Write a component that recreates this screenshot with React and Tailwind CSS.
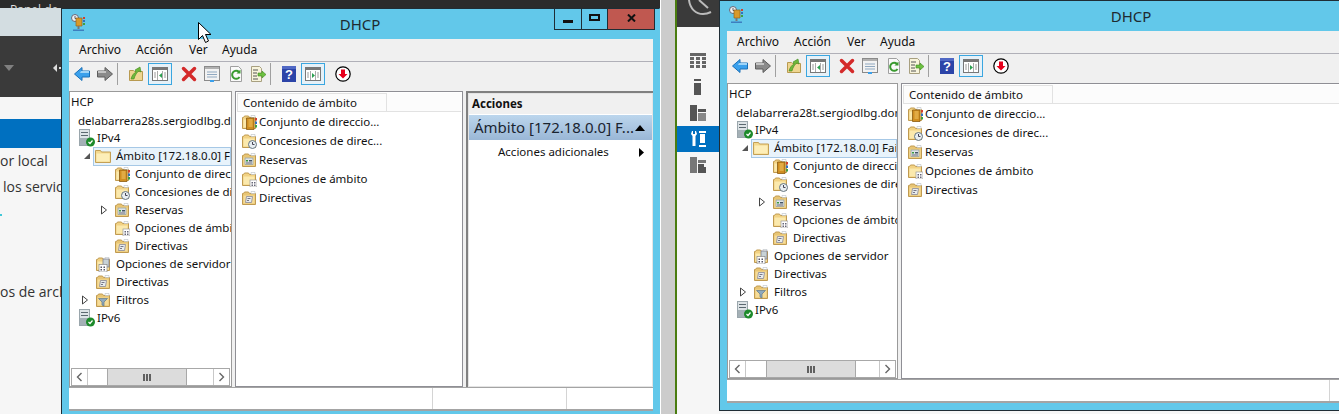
import React from "react";

const Folder = ({ children, dark }) => (
  <svg width="16" height="16" viewBox="0 0 16 16" className="shrink-0">
    <path d="M1.500 14.500V3.500h1l1-1.500h4l1 1.500h6v11z" fill={dark ? "#e8c574" : "#f2d283"} stroke="#c09a50" />
    <path d="M2.500 13.500V5.500h11v8z" fill={dark ? "#f6dc98" : "#fbe9ad"} />
    <path d="M10 1.500h4v2h-4z" fill="#fff" stroke="#b8c0c4" strokeWidth=".6" />
    {children}
  </svg>
);

const Scope = () => (
  <svg width="16" height="16" viewBox="0 0 16 16" className="shrink-0">
    <path d="M.5 14.500V2.500h5l1 1.500h9v10.500z" fill="#f4d98e" stroke="#c4a055" />
    <path d="M1.500 13.500V5.500h13v8z" fill="#fdeeb8" />
  </svg>
);

const Pool = () => (
  <Folder>
    <path d="M5.500 4h7.500v11.500H5.500z" fill="#d08e20" stroke="#8a5a10" strokeWidth=".8" />
    <path d="M7.500 6h4M7.500 8h4M7.500 10h4M7.500 12h4" stroke="#f3c868" />
    <rect x="14" y="4" width="2" height="2.500" fill="#d04030" />
    <rect x="14" y="7.500" width="2" height="2.500" fill="#3070c0" />
    <rect x="14" y="11" width="2" height="2.500" fill="#40a040" />
  </Folder>
);

const Lease = () => (
  <Folder>
    <circle cx="11.500" cy="11.500" r="4" fill="#e8eef2" stroke="#667680" />
    <path d="M11.500 9v2.500h2" stroke="#445" fill="none" />
  </Folder>
);

const Reserve = () => (
  <Folder dark>
    <rect x="4" y="6" width="8" height="6.500" fill="#dfe5e8" stroke="#8a979c" strokeWidth=".7" />
    <path d="M5 8h2v1.500H5z" fill="#3a9a40" />
    <path d="M8 8h3v1.500H8z" fill="#456" />
    <path d="M5 10.500h6v1H5z" fill="#667" />
  </Folder>
);

const Options = () => (
  <Folder>
    <rect x="9" y="9" width="7" height="7" fill="#fff" stroke="#999" strokeWidth=".7" />
    <path d="M10.500 11h1.500v1.500h-1.500zM13 11h1.500v1.500H13zM10.500 13.500h1.500V15h-1.500zM13 13.500h1.500V15H13z" fill="#667" />
  </Folder>
);

const Policy = () => (
  <Folder dark>
    <path d="M5.500 6.500h6l-1 6h-6z" fill="#e8ecec" stroke="#889" strokeWidth=".8" />
    <path d="M6.500 8.500h3M6 10.500h2" stroke="#778" />
  </Folder>
);

const ServerOptions = () => (
  <Folder>
    <rect x="8" y="3" width="6" height="8" fill="#c8d2d6" stroke="#778" strokeWidth=".7" />
    <rect x="4" y="8.500" width="8" height="7.500" fill="#fff" stroke="#888" strokeWidth=".7" />
    <path d="M5.500 10.500H7V12H5.500zM8.500 10.500H10V12H8.500zM5.500 13H7v1.500H5.500zM8.500 13H10v1.500H8.500z" fill="#556" />
  </Folder>
);

const Filter = () => (
  <Folder dark>
    <path d="M3.500 6.500h9L9 10v4l-2-1v-3z" fill="#8fa9bd" stroke="#60788a" strokeWidth=".7" />
  </Folder>
);

const Server = () => (
  <svg width="16" height="18" viewBox="0 0 16 18" className="shrink-0">
    <path d="M0 0h11v17H0z" fill="#9aa6ac" />
    <path d="M1 1h9v15H1z" fill="#dde3e6" />
    <path d="M2 3h7v1H2zM2 6h7v1H2z" fill="#5b6870" />
    <path d="M1 9h9v7H1z" fill="#a4b0b6" />
    <circle cx="11.500" cy="13" r="4.500" fill="#1d8a2a" />
    <path d="M9.500 13l1.500 1.500 2.500-3" stroke="#fff" strokeWidth="1.200" fill="none" />
  </svg>
);

const Arrow = ({ open }) =>
  open ? (
    <svg width="8" height="8" viewBox="0 0 8 8" className="shrink-0">
      <path d="M7 1v6H1z" fill="#555" />
    </svg>
  ) : (
    <svg width="8" height="10" viewBox="0 0 8 10" className="shrink-0">
      <path d="M1.500 1l5 4-5 4z" fill="#fff" stroke="#444" />
    </svg>
  );

const Tb = {
  Back: () => (
    <svg width="16" height="16" viewBox="0 0 16 16">
      <path d="M8 1.500L.5 8 8 14.500V11h7.500V5H8z" fill="#3aa0ec" stroke="#1a70b8" />
      <path d="M7 5h8v2H6z" fill="#9ed4f8" />
    </svg>
  ),
  Fwd: () => (
    <svg width="16" height="16" viewBox="0 0 16 16">
      <path d="M8 1.500L15.500 8 8 14.500V11H.5V5H8z" fill="#8a8a8a" stroke="#5c5c5c" />
      <path d="M1 5h8v2H1z" fill="#c4c4c4" />
    </svg>
  ),
  Up: () => (
    <svg width="16" height="16" viewBox="0 0 16 16">
      <path d="M1.500 14.500V4.500h4l1 1h8v9z" fill="#eed590" stroke="#b89a50" />
      <path d="M3 13c1-4 3-6 5-7L7 4l5-3 1 5-2-1c-2 1-4 4-5 8z" fill="#6fb83a" stroke="#3f8a1e" strokeWidth=".6" />
    </svg>
  ),
  Pane: ({ right }) => (
    <svg width="16" height="14" viewBox="0 0 16 14">
      <rect x=".5" y=".5" width="15" height="13" fill="#fff" stroke="#777" />
      <path d="M1 1h14v2H1z" fill="#777" />
      <path d="M5.500 4v9M10.500 4v9" stroke="#aaa" />
      {right ? <path d="M7 6l3 2.500L7 11z" fill="#2aa050" /> : <path d="M10 6L7 8.500 10 11z" fill="#2aa050" />}
      <path d="M2 6h2M2 8h2M2 10h2M12 6h2M12 8h2M12 10h2" stroke="#999" />
    </svg>
  ),
  X: () => (
    <svg width="16" height="16" viewBox="0 0 16 16">
      <path d="M2.500 2.500l11 11M13.500 2.500l-11 11" stroke="#d42a2a" strokeWidth="3.500" strokeLinecap="round" />
    </svg>
  ),
  Props: () => (
    <svg width="16" height="16" viewBox="0 0 16 16">
      <rect x=".5" y=".5" width="15" height="14" fill="#f2f2f2" stroke="#8a8a8a" />
      <path d="M1 1h14v2H1z" fill="#b0b0b0" />
      <path d="M3 6h10M3 8.500h10M3 11h10" stroke="#8fa8c0" />
      <path d="M6 14h4v2H6z" fill="#3aa0ec" />
    </svg>
  ),
  Refresh: () => (
    <svg width="16" height="16" viewBox="0 0 16 16">
      <path d="M2.500.5h8l3 3v12h-11z" fill="#fafafa" stroke="#a0a0a0" />
      <path d="M11.500 11a4 4 0 1 1-.5-5" fill="none" stroke="#3a9a30" strokeWidth="2" />
      <path d="M12.500 3.500v4h-4z" fill="#3a9a30" />
    </svg>
  ),
  Export: () => (
    <svg width="16" height="16" viewBox="0 0 16 16">
      <path d="M1.500.5h8l2 2v13h-10z" fill="#f8f4dc" stroke="#a8a080" />
      <path d="M3 4h5M3 7h4M3 10h4M3 13h5" stroke="#555" />
      <path d="M8 7h4V5l4 3.500-4 3.500v-2H8z" fill="#6cc040" stroke="#3f8a1e" strokeWidth=".6" />
    </svg>
  ),
  Help: () => (
    <svg width="16" height="16" viewBox="0 0 16 16" className="overflow-visible">
      <rect x="1" y="0" width="14" height="16" fill="#2c44a8" />
      <path d="M1 0h14v3H1z" fill="#5068c4" />
      <text x="8" y="13" textAnchor="middle" fontSize="13" fontWeight="700" fill="#fff" fontFamily="Liberation Sans">?</text>
    </svg>
  ),
  Down: () => (
    <svg width="16" height="16" viewBox="0 0 16 16">
      <circle cx="8" cy="8" r="7.200" fill="#fff" stroke="#000" strokeWidth="1.200" />
      <path d="M6 3.500h4V8h2.500L8 12.500 3.500 8H6z" fill="#e8001c" />
    </svg>
  ),
};

const Sep = () => <div className="ml-[4px] h-[22px] w-[1px] bg-[#a0a0a0]" />;
const Boxed = ({ right }) => (
  <div className="ml-[4px] flex h-[22px] w-[24px] items-center justify-center border border-[#3aa6e0] bg-[#e6f1f8]">
    <Tb.Pane right={right} />
  </div>
);

function Toolbar() {
  return (
    <div className="flex h-[29px] items-center bg-[#f0f0f0] pb-[6px] pl-[5px]">
      <Tb.Back />
      <div className="ml-[7px]"><Tb.Fwd /></div>
      <Sep />
      <div className="ml-[10px]"><Tb.Up /></div>
      <Boxed />
      <div className="ml-[9px]"><Tb.X /></div>
      <div className="ml-[7px]"><Tb.Props /></div>
      <div className="ml-[8px]"><Tb.Refresh /></div>
      <div className="ml-[6px]"><Tb.Export /></div>
      <Sep />
      <div className="ml-[10px]"><Tb.Help /></div>
      <Boxed right />
      <div className="ml-[10px]"><Tb.Down /></div>
    </div>
  );
}

const Text = ({ children }) => <span className="shrink-0 whitespace-nowrap">{children}</span>;

function L2({ icon, children, arrow }) {
  return (
    <div className="flex h-[18px] items-center pl-[29px]">
      <div className="flex w-[15px] shrink-0 items-center pl-[1px]">{arrow && <Arrow />}</div>
      {icon}
      <div className="w-[5px] shrink-0" />
      <Text>{children}</Text>
    </div>
  );
}

function L1({ icon, children, arrow }) {
  return (
    <div className="flex h-[18px] items-center pl-[10px]">
      <div className="flex w-[15px] shrink-0 items-center pl-[1px]">{arrow && <Arrow />}</div>
      {icon}
      <div className="w-[5px] shrink-0" />
      <Text>{children}</Text>
    </div>
  );
}

function L0({ children }) {
  return (
    <div className="flex h-[18px] items-center gap-[2px] pl-[9px]">
      <Server />
      <Text>{children}</Text>
    </div>
  );
}

function Tree({ host, paneCls, thumbCls }) {
  return (
    <div className={`flex shrink-0 flex-col overflow-hidden border border-[#9a9a9a] bg-white ${paneCls}`}>
      <div className="min-h-0 flex-1 overflow-hidden pt-[1px]">
        <div className="flex h-[18px] items-center pl-[1px]"><Text>HCP</Text></div>
        <div className="mt-[1px] flex h-[18px] items-center pl-[8px]"><Text>{host}</Text></div>
        <div className="mt-[-1px]"><L0>IPv4</L0></div>
        <div className="flex h-[18px] items-center pl-[10px]">
          <div className="flex w-[13px] shrink-0 items-center pl-[3px]"><Arrow open /></div>
          <div className="flex h-[19px] min-w-0 flex-1 items-center overflow-hidden border border-[#a6c8e6] bg-[#e8f3fb] pl-[1px]">
            <Scope />
            <div className="w-[5px] shrink-0" />
            <Text>Ámbito [172.18.0.0] Failover</Text>
          </div>
        </div>
        <L2 icon={<Pool />}>Conjunto de direcciones</L2>
        <L2 icon={<Lease />}>Concesiones de direcciones</L2>
        <L2 icon={<Reserve />} arrow>Reservas</L2>
        <L2 icon={<Options />}>Opciones de ámbito</L2>
        <L2 icon={<Policy />}>Directivas</L2>
        <L1 icon={<ServerOptions />}>Opciones de servidor</L1>
        <L1 icon={<Policy />}>Directivas</L1>
        <L1 icon={<Filter />} arrow>Filtros</L1>
        <L0>IPv6</L0>
      </div>
      <div className="mx-[1px] flex h-[18px] shrink-0 border border-[#a8a8a8] bg-white text-[#555]">
        <div className="flex w-[16px] items-center justify-center border-r border-[#c8c8c8]">
          <svg width="7" height="10" viewBox="0 0 7 10"><path d="M5.500 1l-4 4 4 4" fill="none" stroke="#666" strokeWidth="1.400" /></svg>
        </div>
        <div className="flex-1">
          <div className={`flex h-full items-center justify-center border-x border-[#a8a8a8] bg-[#dcdcdc] ${thumbCls}`}>
            <svg width="8" height="7" viewBox="0 0 8 7"><path d="M0 0h2v7H0zM3 0h2v7H3zM6 0h2v7H6z" fill="#606060" /></svg>
          </div>
        </div>
        <div className="flex w-[16px] items-center justify-center border-l border-[#c8c8c8]">
          <svg width="7" height="10" viewBox="0 0 7 10"><path d="M1.500 1l4 4-4 4" fill="none" stroke="#666" strokeWidth="1.400" /></svg>
        </div>
      </div>
    </div>
  );
}

function ContentRow({ icon, children }) {
  return (
    <div className="flex h-[19px] items-center gap-[2px] pl-[5px]">
      {icon}
      <Text>{children}</Text>
    </div>
  );
}

function Content({ paneCls, colCls }) {
  return (
    <div className={`overflow-hidden border border-[#8f8f95] bg-white ${paneCls}`}>
      <div className="mx-[1px] mt-[1px] flex h-[19px] border-b border-[#e2e2e2] bg-[#fcfcfc]">
        <div className={`flex items-center border-x border-t border-[#e2e2e2] pl-[5px] ${colCls}`}>Contenido de ámbito</div>
      </div>
      <div>
        <ContentRow icon={<Pool />}>Conjunto de direccio...</ContentRow>
        <ContentRow icon={<Lease />}>Concesiones de direc...</ContentRow>
        <ContentRow icon={<Reserve />}>Reservas</ContentRow>
        <ContentRow icon={<Options />}>Opciones de ámbito</ContentRow>
        <ContentRow icon={<Policy />}>Directivas</ContentRow>
      </div>
    </div>
  );
}

function Actions() {
  return (
    <div className="ml-[3px] w-[187px] shrink-0 border-l-2 border-t-2 border-[#808080] bg-white">
      <div className="h-[294px] border border-[#e4e4e4] bg-white">
        <div className="flex h-[20px] items-center bg-[#f0f0f0] pl-[3px] font-bold">Acciones</div>
        <div className="mt-[1px] flex h-[25px] items-center justify-between bg-gradient-to-b from-[#bcd6ed] to-[#9ab7d6] pl-[5px] pr-[7px] text-[15px] text-[#1a2430]">
          <span className="whitespace-nowrap">Ámbito [172.18.0.0] F...</span>
          <svg width="10" height="6" viewBox="0 0 10 6"><path d="M5 0l5 6H0z" fill="#000" /></svg>
        </div>
        <div className="flex h-[24px] items-center justify-between pl-[29px] pr-[8px]">
          <span className="whitespace-nowrap">Acciones adicionales</span>
          <svg width="5" height="9" viewBox="0 0 5 9"><path d="M0 0l5 4.500L0 9z" fill="#000" /></svg>
        </div>
      </div>
    </div>
  );
}

function TitleIcon() {
  return (
    <svg width="16" height="18" viewBox="0 0 16 18">
      <circle cx="4" cy="4" r="3.500" fill="#eef2f4" stroke="#667" />
      <path d="M4 2v2.500h2" stroke="#334" fill="none" strokeWidth=".8" />
      <path d="M5 4h6v8H5z" fill="#d89a2c" stroke="#96661a" strokeWidth=".7" />
      <rect x="12" y="3" width="2" height="2" fill="#d04030" />
      <rect x="12" y="6" width="2" height="2" fill="#3070c0" />
      <rect x="12" y="9" width="2" height="2" fill="#40a040" />
      <path d="M7.500 12v3" stroke="#777" strokeWidth="2" />
      <path d="M2 15.500h11v1.500H2z" fill="#3c7fc0" />
    </svg>
  );
}

function Window({ frameCls, buttons, host, treeCls, thumbCls, contentCls, colCls, actions, statusFirst, statusRest }) {
  return (
    <div className={`absolute box-content flex h-[409px] flex-col border border-[#1f2d35] bg-[#62c8ea] pl-[7px] pr-[6px] ${frameCls}`}>
      <div className="relative -mx-[7px] flex h-[30px] shrink-0 items-center justify-center pr-[2px] pt-[1px] text-[15px] text-[#1e2a30]">
        <div className="absolute left-[9px] top-[5px]"><TitleIcon /></div>
        DHCP
        {buttons && (
          <div className="absolute right-[5px] top-[-1px] flex h-[22px] border border-[#1f2d35]">
            <div className="flex w-[27px] items-end justify-center border-r border-[#1f2d35] pb-[6px]"><div className="h-[3px] w-[10px] bg-[#111]" /></div>
            <div className="flex w-[26px] items-center justify-center border-r border-[#1f2d35] pb-[3px]"><div className="h-[7px] w-[11px] border-2 border-[#111]" /></div>
            <div className="flex w-[46px] items-center justify-center bg-[#c05850] pb-[2px]">
              <svg width="9" height="8" viewBox="0 0 9 8"><path d="M1 .5l7 7M8 .5l-7 7" stroke="#111" strokeWidth="2" /></svg>
            </div>
          </div>
        )}
      </div>
      <div className="flex min-h-0 flex-col text-[#111]">
        <div className="flex h-[23px] items-center border-b border-[#b0b0b8] bg-[#f0f0f0] pb-[1px] pl-[10px] text-[12px]">
          <span className="w-[57px]">Archivo</span>
          <span className="w-[53px]">Acción</span>
          <span className="w-[33px]">Ver</span>
          <span>Ayuda</span>
        </div>
        <Toolbar />
        <div className="flex h-[296px] bg-[#f0f0f0] text-[11.5px]">
          <Tree host={host} paneCls={treeCls} thumbCls={thumbCls} />
          <Content paneCls={contentCls} colCls={colCls} />
          {actions && <Actions />}
        </div>
        <div className="flex h-[24px] border-b-2 border-t border-[#a4a4a4] bg-white">
          <div className={`border-r border-[#d4d4d4] ${statusFirst}`} />
          <div className={`border-r border-[#d4d4d4] ${statusRest}`} />
        </div>
      </div>
    </div>
  );
}

function LeftBackdrop() {
  return (
    <div className="flex h-full w-[660px] shrink-0 flex-col bg-[#f6f6f6] font-['Open_Sans',sans-serif] text-[14px] text-[#333]">
      <div className="h-[8px] overflow-hidden bg-[#2b2b2b] pl-[10px] pt-[3px] text-[12px] leading-[14px] text-[#ddd]">Panel de</div>
      <div className="h-[28px] bg-[#d3dde1]" />
      <div className="flex h-[61px] items-center gap-[39px] bg-[#3a3a3a] pl-[4px] pt-[3px]">
        <svg width="10" height="6" viewBox="0 0 10 6"><path d="M0 0h10L5 6z" fill="#808080" /></svg>
        <svg width="8" height="8" viewBox="0 0 8 8"><path d="M4 0v8L0 4z" fill="#ddd" /><rect x="6" y="3" width="2" height="2" fill="#ddd" /></svg>
      </div>
      <div className="h-[22px]" />
      <div className="h-[29px] bg-[#0070c0]" />
      <div className="mt-[2px] flex h-[20px] items-center whitespace-nowrap">or local</div>
      <div className="mt-[6px] flex h-[20px] items-center whitespace-nowrap pl-[3px]">los servid</div>
      <div className="mt-[18px] h-[2px] w-[2px] bg-[#40c8d8]" />
      <div className="mt-[65px] flex h-[20px] items-center whitespace-nowrap">os de arch</div>
    </div>
  );
}

function RightBackdrop() {
  return (
    <div className="flex h-full min-w-0 flex-1">
      <div className="w-[15px] shrink-0 border-l border-white bg-[#cccccc]" />
      <div className="w-[2px] shrink-0 bg-[#4a7c10]" />
      <div className="flex min-w-0 flex-1 flex-col bg-[#f6f6f6]">
        <div className="flex h-[27px] w-[42px] items-start justify-start overflow-hidden bg-[#3a3a3a] pl-[10px]">
          <svg width="30" height="27" viewBox="0 0 30 27"><path d="M2 0c1 9 7 14 14 14 3 0 6-1 8-2" fill="none" stroke="#bbb" strokeWidth="2" /><path d="M12 0l9 8" stroke="#bbb" strokeWidth="2" /></svg>
        </div>
        <div className="flex w-[42px] flex-col items-center">
          <div className="mt-[26px] h-[16px]">
            <svg width="17" height="16" viewBox="0 0 17 16"><path d="M0 0h16v3H0zM0 4h4v3H0zM6 4h4v3H6zM12 4h4v3h-4zM0 8h4v3H0zM6 8h4v3H6zM12 8h4v3h-4zM0 12h4v3H0zM6 12h4v3H6zM12 12h4v3h-4z" fill="#666" /></svg>
          </div>
          <div className="mt-[10px] h-[17px]">
            <svg width="8" height="17" viewBox="0 0 8 17"><path d="M0 0h7v2H0zM0 4h7v12H0z" fill="#555" /></svg>
          </div>
          <div className="mt-[9px] h-[17px]">
            <svg width="17" height="17" viewBox="0 0 17 17"><path d="M0 0h7v16H0z" fill="#555" /><path d="M8 4h8v3H8z" fill="#555" /><path d="M8 8h8v8H8z" fill="#888" /></svg>
          </div>
          <div className="mt-[4px] flex h-[26px] w-full items-center justify-center bg-[#0070c0]">
            <svg width="17" height="16" viewBox="0 0 17 16"><path d="M2 0h1v3h2V0h1l1 3-1.500 2v10h-3V5L1 3z" fill="#fff" /><path d="M9 0h7v2H9zM10 3h5v9h-5zM9 14h7v2H9z" fill="#fff" /></svg>
          </div>
          <div className="mt-[5px] h-[17px]">
            <svg width="17" height="17" viewBox="0 0 17 17"><path d="M0 0h7v16H0z" fill="#777" /><path d="M8 3h8v3H8z" fill="#777" /><path d="M8 7h6v3h2v6H8z" fill="#555" /></svg>
          </div>
        </div>
      </div>
    </div>
  );
}

export default function App() {
  return (
    <div className="relative flex h-[414px] w-[1339px] overflow-hidden bg-white font-['Noto_Sans',sans-serif]">
      <LeftBackdrop />
      <RightBackdrop />
      <Window
        frameCls="left-[61px] top-[8px] w-[584px] border-r-[#62c8ea]"
        buttons
        actions
        host="delabarrera28s.sergiodlbg.dom"
        treeCls="w-[163px]"
        thumbCls="ml-[19px] w-[80px]"
        contentCls="ml-[3px] w-[228px] shrink-0"
        colCls="w-[150px]"
        statusFirst="w-[364px]"
        statusRest="w-[134px]"
      />
      <Window
        frameCls="left-[719px] top-[0px] w-[810px]"
        host="delabarrera28t.sergiodlbg.dom"
        treeCls="w-[171px]"
        thumbCls="ml-[20px] w-[90px]"
        contentCls="ml-[3px] flex-1"
        colCls="w-[150px]"
        statusFirst="w-[603px]"
        statusRest="w-[100px]"
      />
      <svg width="14" height="22" viewBox="0 0 14 22" className="absolute left-[198px] top-[22px]">
        <path d="M.5.500v17l4-4 3 7 3-1.500-3-6.500h5.500z" fill="#fff" stroke="#000" />
      </svg>
    </div>
  );
}
